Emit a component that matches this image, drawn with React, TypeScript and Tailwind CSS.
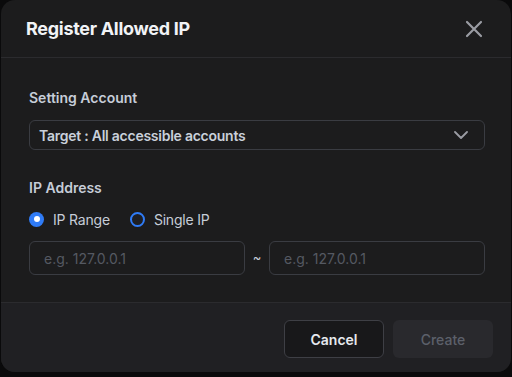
import React from "react";

export default function App() {
  return (
    <div className="w-[512px] h-[377px] bg-[#0a0a0b] overflow-hidden" style={{ fontFamily: "Inter, 'Noto Sans', sans-serif" }}>
      <div className="ml-[1px] w-[510px] h-[372px] rounded-[14px] bg-[#1c1c1d] overflow-hidden flex flex-col">
        <div className="h-[58px] flex items-center justify-between pl-[25px] pr-[28px] border-b border-[#2b2b2e] shrink-0">
          <h1 className="text-[18px] font-bold text-[#f1f3f6] tracking-[-0.3px]">Register Allowed IP</h1>
          <svg width="18" height="18" viewBox="0 0 18 18" className="text-[#9a9ca3]">
            <path d="M2 2 L16 16 M16 2 L2 16" stroke="currentColor" strokeWidth="2.2" strokeLinecap="round" />
          </svg>
        </div>
        <div className="flex-1 pl-[28px] pr-[26px] pt-[30px]">
          <div className="text-[14px] font-semibold text-[#c6cdd8] leading-[20px]">Setting Account</div>
          <div className="mt-[12px] h-[30px] rounded-[6px] border border-[#3a3c42] flex items-center justify-between pl-[9px] pr-[16px]">
            <span className="text-[14px] font-semibold text-[#c9d0da] tracking-[-0.25px]">Target : All accessible accounts</span>
            <svg width="14" height="8" viewBox="0 0 14 8" className="text-[#9a9ca3]">
              <path d="M1 1 L7 7 L13 1" stroke="currentColor" strokeWidth="1.8" fill="none" strokeLinecap="round" strokeLinejoin="round" />
            </svg>
          </div>
          <div className="mt-[28px] text-[14px] font-semibold text-[#c6cdd8] leading-[20px]">IP Address</div>
          <div className="mt-[11px] flex items-center gap-[20px] h-[20px]">
            <div className="flex items-center gap-[9px]">
              <span className="w-[15px] h-[15px] rounded-full bg-[#2f7bf6] flex items-center justify-center">
                <span className="w-[6px] h-[6px] rounded-full bg-white" />
              </span>
              <span className="text-[14px] text-[#c6cdd8] tracking-[-0.2px]">IP Range</span>
            </div>
            <div className="flex items-center gap-[9px]">
              <span className="w-[15px] h-[15px] rounded-full border-2 border-[#2f7bf6] bg-[#1e1f24]" />
              <span className="text-[14px] text-[#c6cdd8] tracking-[-0.2px]">Single IP</span>
            </div>
          </div>
          <div className="mt-[12px] flex items-center">
            <div className="w-[216px] h-[34px] rounded-[6px] border border-[#3a3c42] flex items-center pl-[14px]">
              <span className="text-[14px] text-[#555962]">e.g. 127.0.0.1</span>
            </div>
            <span className="flex-1 text-center text-[13px] text-[#c6cdd8]">~</span>
            <div className="w-[216px] h-[34px] rounded-[6px] border border-[#3a3c42] flex items-center pl-[14px]">
              <span className="text-[14px] text-[#555962]">e.g. 127.0.0.1</span>
            </div>
          </div>
        </div>
        <div className="h-[70px] shrink-0 bg-[#202023] border-t border-[#2b2b2e] flex items-start justify-end gap-[9px] pr-[18px] pt-[17px]">
          <button className="w-[100px] h-[38px] rounded-[6px] border border-[#3e3f45] bg-[#18181a] text-[14px] font-semibold text-[#e6e9ee]">Cancel</button>
          <button className="w-[100px] h-[38px] rounded-[6px] bg-[#29292d] text-[14px] font-medium text-[#5c606a]">Create</button>
        </div>
      </div>
    </div>
  );
}
